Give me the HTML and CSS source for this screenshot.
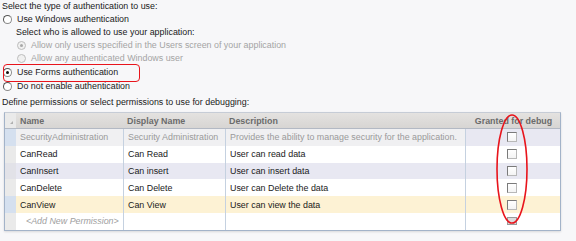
FILE: index.html
```html
<!DOCTYPE html>
<html>
<head>
<meta charset="utf-8">
<link rel="stylesheet" href="styles.css">
</head>
<body>
<div class="page">
  <div class="line">Select the type of authentication to use:</div>
  <div class="line opt"><span class="radio"></span>Use Windows authentication</div>
  <div class="line sub">Select who is allowed to use your application:</div>
  <div class="line opt sub2 dis"><span class="radio dis checked"></span>Allow only users specified in the Users screen of your application</div>
  <div class="line opt sub2 dis"><span class="radio dis"></span>Allow any authenticated Windows user</div>
  <div class="line opt tall"><span class="radio checked"></span>Use Forms authentication</div>
  <div class="line opt tall"><span class="radio"></span>Do not enable authentication</div>
  <div class="line define">Define permissions or select permissions to use for debugging:</div>

  <div class="grid">
    <div class="row head">
      <div class="c rh"><span class="sort"></span></div>
      <div class="c">Name</div>
      <div class="c">Display Name</div>
      <div class="c">Description</div>
      <div class="c g">Granted for debug</div>
    </div>
    <div class="row r-sys">
      <div class="c rh sel"></div>
      <div class="c">SecurityAdministration</div>
      <div class="c b">Security Administration</div>
      <div class="c b">Provides the ability to manage security for the application.</div>
      <div class="c b g alt"><span class="cb"></span></div>
    </div>
    <div class="row">
      <div class="c rh"></div>
      <div class="c">CanRead</div>
      <div class="c b">Can Read</div>
      <div class="c b">User can read data</div>
      <div class="c b g"><span class="cb"></span></div>
    </div>
    <div class="row r-alt">
      <div class="c rh"></div>
      <div class="c">CanInsert</div>
      <div class="c b">Can insert</div>
      <div class="c b">User can insert data</div>
      <div class="c b g"><span class="cb"></span></div>
    </div>
    <div class="row">
      <div class="c rh"></div>
      <div class="c">CanDelete</div>
      <div class="c b">Can Delete</div>
      <div class="c b">User can Delete the data</div>
      <div class="c b g"><span class="cb"></span></div>
    </div>
    <div class="row r-cur">
      <div class="c rh sel"></div>
      <div class="c">CanView</div>
      <div class="c b">Can View</div>
      <div class="c b">User can view the data</div>
      <div class="c b g"><span class="cb"></span></div>
    </div>
    <div class="row r-new">
      <div class="c rh"></div>
      <div class="c add">&lt;Add New Permission&gt;</div>
      <div class="c b"></div>
      <div class="c b"></div>
      <div class="c b g"><span class="cb ghost"></span></div>
    </div>
  </div>

  <div class="mark-rect"></div>
  <svg class="mark-oval" width="40" height="116" viewBox="0 0 40 116"><ellipse cx="20" cy="58" rx="15" ry="54" fill="none" stroke="#e8141c" stroke-width="1.6"/></svg>
</div>
</body>
</html>
```
FILE: styles.css
```css
html, body { margin: 0; padding: 0; }
body {
  background: #f7f7f9;
  font-family: "Liberation Sans", Arial, sans-serif;
  font-size: 8.9px;
  color: #1a1a1a;
  width: 576px;
  height: 241px;
  overflow: hidden;
}
.page { position: relative; padding: 0 0 0 2px; }
.line { height: 13px; line-height: 13px; white-space: nowrap; display: flex; align-items: center; }
.line.tall { height: 14px; }
.opt .radio { margin-right: 5px; }
.line.opt { padding-left: 1px; }
.sub { padding-left: 14px; }
.line.sub2 { padding-left: 15px; }
.dis { color: #a4a4a4; }
.define { margin-top: 3px; margin-bottom: 3px; }
.radio {
  width: 7px; height: 7px; border-radius: 50%;
  border: 1px solid #8a8a8a;
  border-top-color: #555; border-left-color: #555;
  background: #fff;
  display: inline-block; position: relative; flex: none;
}
.radio.dis { border-color: #bdbdbd; background: #f0f0f0; }
.radio.checked::after {
  content: ""; position: absolute; left: 2px; top: 2px;
  width: 3px; height: 3px; border-radius: 50%; background: #111;
}
.radio.dis.checked::after { background: #a8a8a8; }

.grid {
  margin-left: 2px;
  width: 555px;
  border: 1px solid #a3b3c9;
  border-top-color: #c6ccd6;
  background: #fff;
  box-shadow: 0 1px 2px rgba(0,0,0,0.12);
}
.row { display: grid; grid-template-columns: 11px 107px 102px 240px 95px; height: 16.8px; }
.row.head { height: 15px; background: linear-gradient(#e4e2e0, #d7d5d3); border-bottom: 1px solid #b3b9c4; }
.c { display: flex; align-items: center; padding-left: 4px; white-space: nowrap; overflow: hidden; }
.head .c { font-weight: bold; color: #6b6b6b; }
.head .c.rh { padding: 0; position: relative; }
.sort { position: absolute; left: 5px; top: 8px; width: 0; height: 0; border-left: 3px solid transparent; border-bottom: 3px solid #b0b0b0; }
.c.b { border-left: 1px solid #c5d1e0; }
.c.g { justify-content: center; padding-left: 0; }
.head .c.g { padding-left: 2px; }
.rh { background: #eaeaea; padding: 0; }
.rh.sel { background: #d5e0ef; }
.r-sys { background: #f0f0f2; color: #9a9a9a; }
.r-sys .alt { background: #e8e8f2; }
.r-alt { background: #e8e8f2; }
.r-alt .rh { background: #e2e2e8; }
.r-cur { background: #fdf2d4; }
.add { color: #a0a0a0; font-style: italic; padding-left: 10px; }
.cb {
  width: 8px; height: 8px; display: inline-block;
  border: 1px solid #7a7a7a; border-right-color: #b8b8b8; border-bottom-color: #b8b8b8;
  background: linear-gradient(#fff, #f4f4f4);
  margin-right: 2px;
}
.cb.ghost { border-color: #9a9a9a; background: #dcdcdc; height: 6px; }
.mark-rect {
  position: absolute; left: 3px; top: 64px; width: 135px; height: 16px;
  border: 1.5px solid #e8141c; border-radius: 4px;
}
.mark-oval { position: absolute; left: 492px; top: 111px; }
```
